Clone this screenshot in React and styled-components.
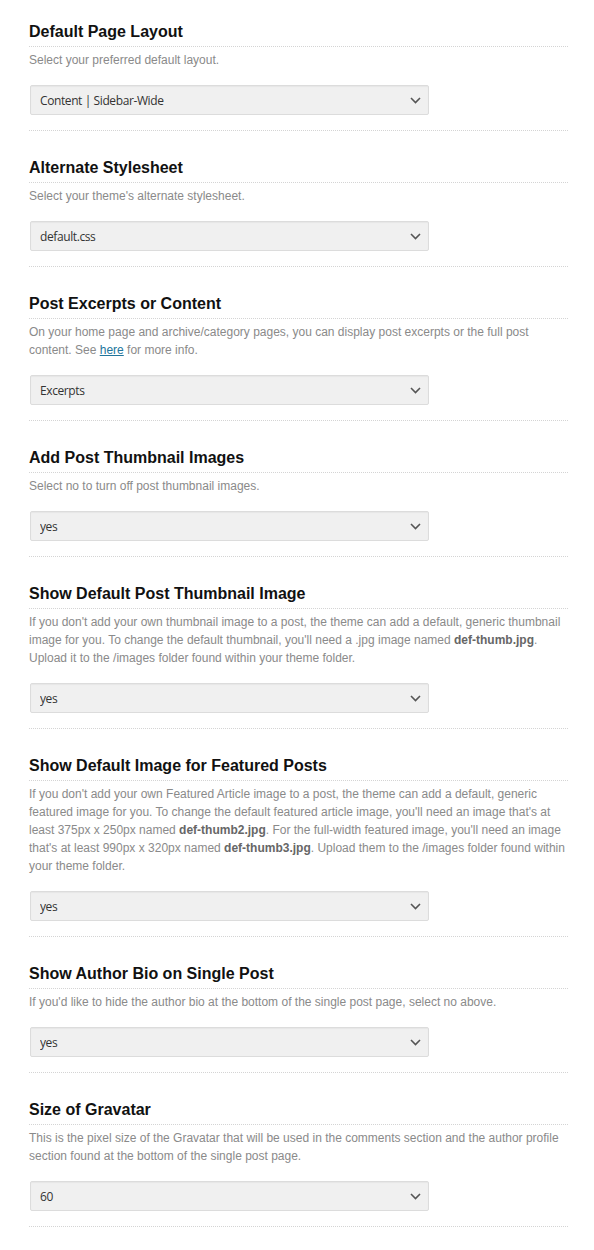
import React from "react";
import styled, { createGlobalStyle } from "styled-components";

const Global = createGlobalStyle`
  html, body { margin: 0; padding: 0; background: #fff; }
  body { font-family: "Liberation Sans", Arial, sans-serif; }
`;

const Page = styled.div`
  padding: 22px 26px 0 29px;
  width: 539px;
`;

const Section = styled.section`
  padding-bottom: 15px;
  border-bottom: 1px dotted #d4d4d4;
  margin-bottom: 27px;
`;

const Heading = styled.h3`
  margin: 0;
  font-size: 16px;
  line-height: 20px;
  font-weight: bold;
  color: #111;
  padding-bottom: 4px;
  border-bottom: 1px dotted #d4d4d4;
`;

const Desc = styled.p`
  margin: 4px 0 16px;
  font-size: 12px;
  line-height: 18px;
  color: #8a8a8a;
  b { color: #666; }
  a { color: #21759b; text-decoration: underline; }
`;

const SelectWrap = styled.div`
  position: relative;
  margin-left: 1px;
  width: 399px;
  height: 30px;
`;

const Select = styled.select`
  appearance: none;
  -webkit-appearance: none;
  width: 100%;
  height: 30px;
  box-sizing: border-box;
  margin: 0;
  padding: 0 28px 0 9px;
  background: #f0f0f0;
  border: 1px solid #dcdcdc;
  border-radius: 2px;
  box-shadow: inset 0 1px 1px rgba(0, 0, 0, 0.04);
  font-family: "Open Sans", "Segoe UI", sans-serif;
  font-size: 12px;
  letter-spacing: -0.4px;
  color: #333;
  outline: none;
`;

const Chevron = styled.svg`
  position: absolute;
  right: 8px;
  top: 12px;
  pointer-events: none;
`;

const Dropdown = ({ value }) => (
  <SelectWrap>
    <Select defaultValue={value}>
      <option value={value}>{value}</option>
    </Select>
    <Chevron width="11" height="7" viewBox="0 0 11 7">
      <path d="M1 1 L5.5 5.5 L10 1" fill="none" stroke="#555" strokeWidth="1.6" />
    </Chevron>
  </SelectWrap>
);

const sections = [
  {
    title: "Default Page Layout",
    desc: <>Select your preferred default layout.</>,
    value: "Content | Sidebar-Wide",
  },
  {
    title: "Alternate Stylesheet",
    desc: <>Select your theme's alternate stylesheet.</>,
    value: "default.css",
  },
  {
    title: "Post Excerpts or Content",
    desc: (
      <>
        On your home page and archive/category pages, you can display post excerpts or the full post
        <br />
        content. See <a href="#">here</a> for more info.
      </>
    ),
    value: "Excerpts",
  },
  {
    title: "Add Post Thumbnail Images",
    desc: <>Select no to turn off post thumbnail images.</>,
    value: "yes",
  },
  {
    title: "Show Default Post Thumbnail Image",
    desc: (
      <>
        If you don't add your own thumbnail image to a post, the theme can add a default, generic thumbnail
        <br />
        image for you. To change the default thumbnail, you'll need a .jpg image named <b>def-thumb.jpg</b>.
        <br />
        Upload it to the /images folder found within your theme folder.
      </>
    ),
    value: "yes",
  },
  {
    title: "Show Default Image for Featured Posts",
    desc: (
      <>
        If you don't add your own Featured Article image to a post, the theme can add a default, generic
        <br />
        featured image for you. To change the default featured article image, you'll need an image that's at
        <br />
        least 375px x 250px named <b>def-thumb2.jpg</b>. For the full-width featured image, you'll need an image
        <br />
        that's at least 990px x 320px named <b>def-thumb3.jpg</b>. Upload them to the /images folder found within
        <br />
        your theme folder.
      </>
    ),
    value: "yes",
  },
  {
    title: "Show Author Bio on Single Post",
    desc: <>If you'd like to hide the author bio at the bottom of the single post page, select no above.</>,
    value: "yes",
  },
  {
    title: "Size of Gravatar",
    desc: (
      <>
        This is the pixel size of the Gravatar that will be used in the comments section and the author profile
        <br />
        section found at the bottom of the single post page.
      </>
    ),
    value: "60",
  },
];

export default function App() {
  return (
    <>
      <Global />
      <Page>
        {sections.map((s) => (
          <Section key={s.title}>
            <Heading>{s.title}</Heading>
            <Desc>{s.desc}</Desc>
            <Dropdown value={s.value} />
          </Section>
        ))}
      </Page>
    </>
  );
}
